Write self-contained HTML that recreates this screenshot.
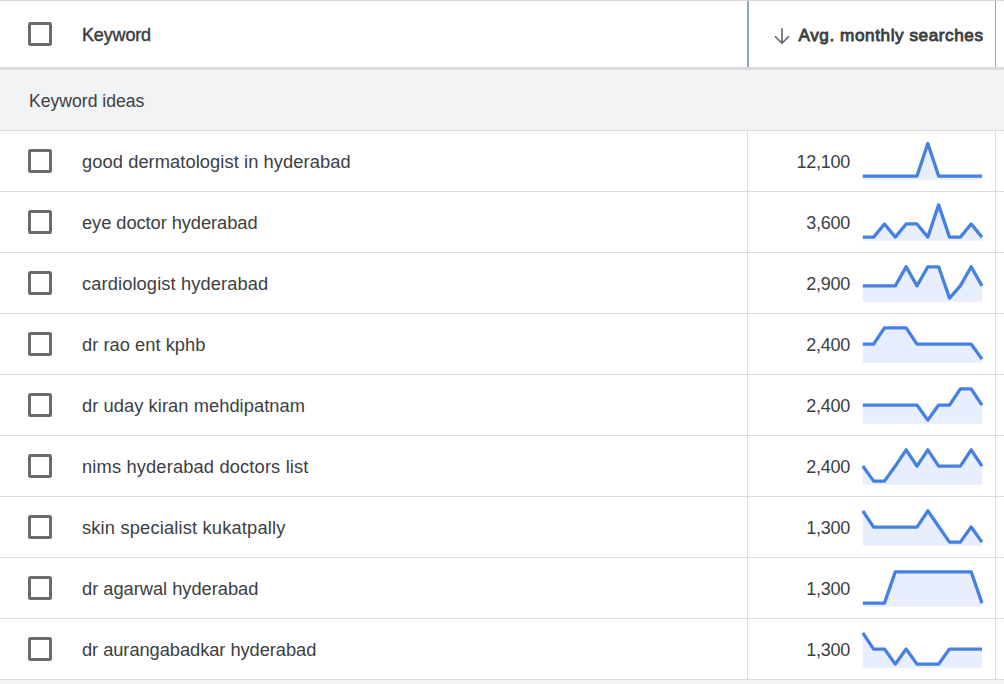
<!DOCTYPE html>
<html><head><meta charset="utf-8"><style>
html,body{margin:0;padding:0;}
body{width:1004px;height:684px;position:relative;overflow:hidden;background:#fff;font-family:"Liberation Sans",sans-serif;color:#3c4043;}
.abs{position:absolute;}
.topline{position:absolute;left:0;top:0;width:1004px;height:1px;background:#d6d6d6;}
.hdr{position:absolute;left:0;top:1px;width:1004px;height:66px;background:#fff;}
.hbord{position:absolute;left:0;top:67px;width:1004px;height:3px;background:#dadce0;}
.ideas{position:absolute;left:0;top:70px;width:1004px;height:60px;background:#f1f3f4;}
.ideas span{position:absolute;left:29px;top:1px;line-height:60px;font-size:17.6px;}
.cb{position:absolute;left:28px;width:18px;height:18px;border:3px solid #6b6b6b;border-radius:2.5px;}
.row{position:absolute;left:0;width:1004px;height:60px;border-bottom:1px solid #dadce0;}
.row .cb{top:18px;}
.kw{position:absolute;left:82px;top:1px;line-height:60px;font-size:18.3px;white-space:nowrap;}
.num{position:absolute;right:154px;top:1px;line-height:60px;font-size:18px;letter-spacing:-0.25px;}
.sp{position:absolute;left:855px;top:0;}
.vl{position:absolute;width:1px;background:#dadce0;}
.bl{position:absolute;background:#93a5c3;}
.bottom{position:absolute;left:0;top:680px;width:1004px;height:4px;background:#f1f3f4;}
.hk{position:absolute;left:82px;top:1px;line-height:66px;font-size:18px;font-weight:normal;-webkit-text-stroke:0.45px #3c4043;letter-spacing:-0.15px;}
.ha{position:absolute;left:798.5px;top:1px;line-height:66px;font-size:17.2px;font-weight:normal;-webkit-text-stroke:0.85px #3c4043;white-space:nowrap;letter-spacing:0.55px;}
</style></head><body>
<div class="topline"></div>
<div class="hdr"><div class="cb" style="top:21px"></div><div class="hk">Keyword</div>
<svg class="abs" style="left:770px;top:22px" width="24" height="24" viewBox="0 0 24 24"><path d="M12 5.2v15.2M5 13.2l7 7 7-7" fill="none" stroke="#606060" stroke-width="1.6"/></svg>
<div class="ha">Avg. monthly searches</div></div>
<div class="bl" style="left:747px;top:1px;width:2px;height:66px"></div>
<div class="bl" style="left:995px;top:1px;width:1px;height:66px"></div>
<div class="hbord"></div>
<div class="ideas"><span>Keyword ideas</span></div>
<div class="row" style="top:130px;height:0;"></div>
<div class="row" style="top:131px"><div class="cb"></div><div class="kw" style="letter-spacing:0.077px">good dermatologist in hyderabad</div><div class="num">12,100</div><svg class="sp" width="140" height="60" viewBox="0 0 140 60"><path d="M7.80,48.8 L7.80,45.10 L18.64,45.10 L29.47,45.10 L40.31,45.10 L51.15,45.10 L61.98,45.10 L72.82,12.55 L83.65,45.10 L94.49,45.10 L105.33,45.10 L116.16,45.10 L127.00,45.10 L127.00,48.8 Z" fill="#e8eefd"/><polyline points="7.80,45.10 18.64,45.10 29.47,45.10 40.31,45.10 51.15,45.10 61.98,45.10 72.82,12.55 83.65,45.10 94.49,45.10 105.33,45.10 116.16,45.10 127.00,45.10" fill="none" stroke="#4581e2" stroke-width="3.3" stroke-linejoin="round"/></svg></div><div class="row" style="top:192px"><div class="cb"></div><div class="kw" style="letter-spacing:-0.068px">eye doctor hyderabad</div><div class="num">3,600</div><svg class="sp" width="140" height="60" viewBox="0 0 140 60"><path d="M7.80,48.8 L7.80,45.10 L18.64,45.10 L29.47,31.95 L40.31,45.10 L51.15,31.95 L61.98,31.95 L72.82,45.10 L83.65,12.86 L94.49,45.10 L105.33,45.10 L116.16,31.95 L127.00,45.10 L127.00,48.8 Z" fill="#e8eefd"/><polyline points="7.80,45.10 18.64,45.10 29.47,31.95 40.31,45.10 51.15,31.95 61.98,31.95 72.82,45.10 83.65,12.86 94.49,45.10 105.33,45.10 116.16,31.95 127.00,45.10" fill="none" stroke="#4581e2" stroke-width="3.3" stroke-linejoin="round"/></svg></div><div class="row" style="top:253px"><div class="cb"></div><div class="kw" style="letter-spacing:0.105px">cardiologist hyderabad</div><div class="num">2,900</div><svg class="sp" width="140" height="60" viewBox="0 0 140 60"><path d="M7.80,48.8 L7.80,32.89 L18.64,32.89 L29.47,32.89 L40.31,32.89 L51.15,13.80 L61.98,32.89 L72.82,13.80 L83.65,13.80 L94.49,45.10 L105.33,32.89 L116.16,13.80 L127.00,32.89 L127.00,48.8 Z" fill="#e8eefd"/><polyline points="7.80,32.89 18.64,32.89 29.47,32.89 40.31,32.89 51.15,13.80 61.98,32.89 72.82,13.80 83.65,13.80 94.49,45.10 105.33,32.89 116.16,13.80 127.00,32.89" fill="none" stroke="#4581e2" stroke-width="3.3" stroke-linejoin="round"/></svg></div><div class="row" style="top:314px"><div class="cb"></div><div class="kw" style="letter-spacing:0.029px">dr rao ent kphb</div><div class="num">2,400</div><svg class="sp" width="140" height="60" viewBox="0 0 140 60"><path d="M7.80,48.8 L7.80,30.08 L18.64,30.08 L29.47,13.80 L40.31,13.80 L51.15,13.80 L61.98,30.08 L72.82,30.08 L83.65,30.08 L94.49,30.08 L105.33,30.08 L116.16,30.08 L127.00,45.10 L127.00,48.8 Z" fill="#e8eefd"/><polyline points="7.80,30.08 18.64,30.08 29.47,13.80 40.31,13.80 51.15,13.80 61.98,30.08 72.82,30.08 83.65,30.08 94.49,30.08 105.33,30.08 116.16,30.08 127.00,45.10" fill="none" stroke="#4581e2" stroke-width="3.3" stroke-linejoin="round"/></svg></div><div class="row" style="top:375px"><div class="cb"></div><div class="kw" style="letter-spacing:0.062px">dr uday kiran mehdipatnam</div><div class="num">2,400</div><svg class="sp" width="140" height="60" viewBox="0 0 140 60"><path d="M7.80,48.8 L7.80,30.08 L18.64,30.08 L29.47,30.08 L40.31,30.08 L51.15,30.08 L61.98,30.08 L72.82,45.10 L83.65,30.08 L94.49,30.08 L105.33,13.80 L116.16,13.80 L127.00,30.08 L127.00,48.8 Z" fill="#e8eefd"/><polyline points="7.80,30.08 18.64,30.08 29.47,30.08 40.31,30.08 51.15,30.08 61.98,30.08 72.82,45.10 83.65,30.08 94.49,30.08 105.33,13.80 116.16,13.80 127.00,30.08" fill="none" stroke="#4581e2" stroke-width="3.3" stroke-linejoin="round"/></svg></div><div class="row" style="top:436px"><div class="cb"></div><div class="kw" style="letter-spacing:0.150px">nims hyderabad doctors list</div><div class="num">2,400</div><svg class="sp" width="140" height="60" viewBox="0 0 140 60"><path d="M7.80,48.8 L7.80,30.08 L18.64,45.10 L29.47,45.10 L40.31,30.08 L51.15,13.80 L61.98,30.08 L72.82,13.80 L83.65,30.08 L94.49,30.08 L105.33,30.08 L116.16,13.80 L127.00,30.08 L127.00,48.8 Z" fill="#e8eefd"/><polyline points="7.80,30.08 18.64,45.10 29.47,45.10 40.31,30.08 51.15,13.80 61.98,30.08 72.82,13.80 83.65,30.08 94.49,30.08 105.33,30.08 116.16,13.80 127.00,30.08" fill="none" stroke="#4581e2" stroke-width="3.3" stroke-linejoin="round"/></svg></div><div class="row" style="top:497px"><div class="cb"></div><div class="kw" style="letter-spacing:0.168px">skin specialist kukatpally</div><div class="num">1,300</div><svg class="sp" width="140" height="60" viewBox="0 0 140 60"><path d="M7.80,48.8 L7.80,13.80 L18.64,30.08 L29.47,30.08 L40.31,30.08 L51.15,30.08 L61.98,30.08 L72.82,13.80 L83.65,29.45 L94.49,45.10 L105.33,45.10 L116.16,30.08 L127.00,45.10 L127.00,48.8 Z" fill="#e8eefd"/><polyline points="7.80,13.80 18.64,30.08 29.47,30.08 40.31,30.08 51.15,30.08 61.98,30.08 72.82,13.80 83.65,29.45 94.49,45.10 105.33,45.10 116.16,30.08 127.00,45.10" fill="none" stroke="#4581e2" stroke-width="3.3" stroke-linejoin="round"/></svg></div><div class="row" style="top:558px"><div class="cb"></div><div class="kw" style="letter-spacing:-0.021px">dr agarwal hyderabad</div><div class="num">1,300</div><svg class="sp" width="140" height="60" viewBox="0 0 140 60"><path d="M7.80,48.8 L7.80,45.10 L18.64,45.10 L29.47,45.10 L40.31,13.80 L51.15,13.80 L61.98,13.80 L72.82,13.80 L83.65,13.80 L94.49,13.80 L105.33,13.80 L116.16,13.80 L127.00,45.10 L127.00,48.8 Z" fill="#e8eefd"/><polyline points="7.80,45.10 18.64,45.10 29.47,45.10 40.31,13.80 51.15,13.80 61.98,13.80 72.82,13.80 83.65,13.80 94.49,13.80 105.33,13.80 116.16,13.80 127.00,45.10" fill="none" stroke="#4581e2" stroke-width="3.3" stroke-linejoin="round"/></svg></div><div class="row" style="top:619px"><div class="cb"></div><div class="kw" style="letter-spacing:-0.060px">dr aurangabadkar hyderabad</div><div class="num">1,300</div><svg class="sp" width="140" height="60" viewBox="0 0 140 60"><path d="M7.80,48.8 L7.80,13.80 L18.64,30.08 L29.47,30.08 L40.31,45.10 L51.15,30.08 L61.98,45.10 L72.82,45.10 L83.65,45.10 L94.49,30.08 L105.33,30.08 L116.16,30.08 L127.00,30.08 L127.00,48.8 Z" fill="#e8eefd"/><polyline points="7.80,13.80 18.64,30.08 29.47,30.08 40.31,45.10 51.15,30.08 61.98,45.10 72.82,45.10 83.65,45.10 94.49,30.08 105.33,30.08 116.16,30.08 127.00,30.08" fill="none" stroke="#4581e2" stroke-width="3.3" stroke-linejoin="round"/></svg></div>
<div class="vl" style="left:747px;top:131px;height:549px"></div>
<div class="vl" style="left:995px;top:131px;height:549px"></div>
<div class="bottom"></div>
</body></html>
